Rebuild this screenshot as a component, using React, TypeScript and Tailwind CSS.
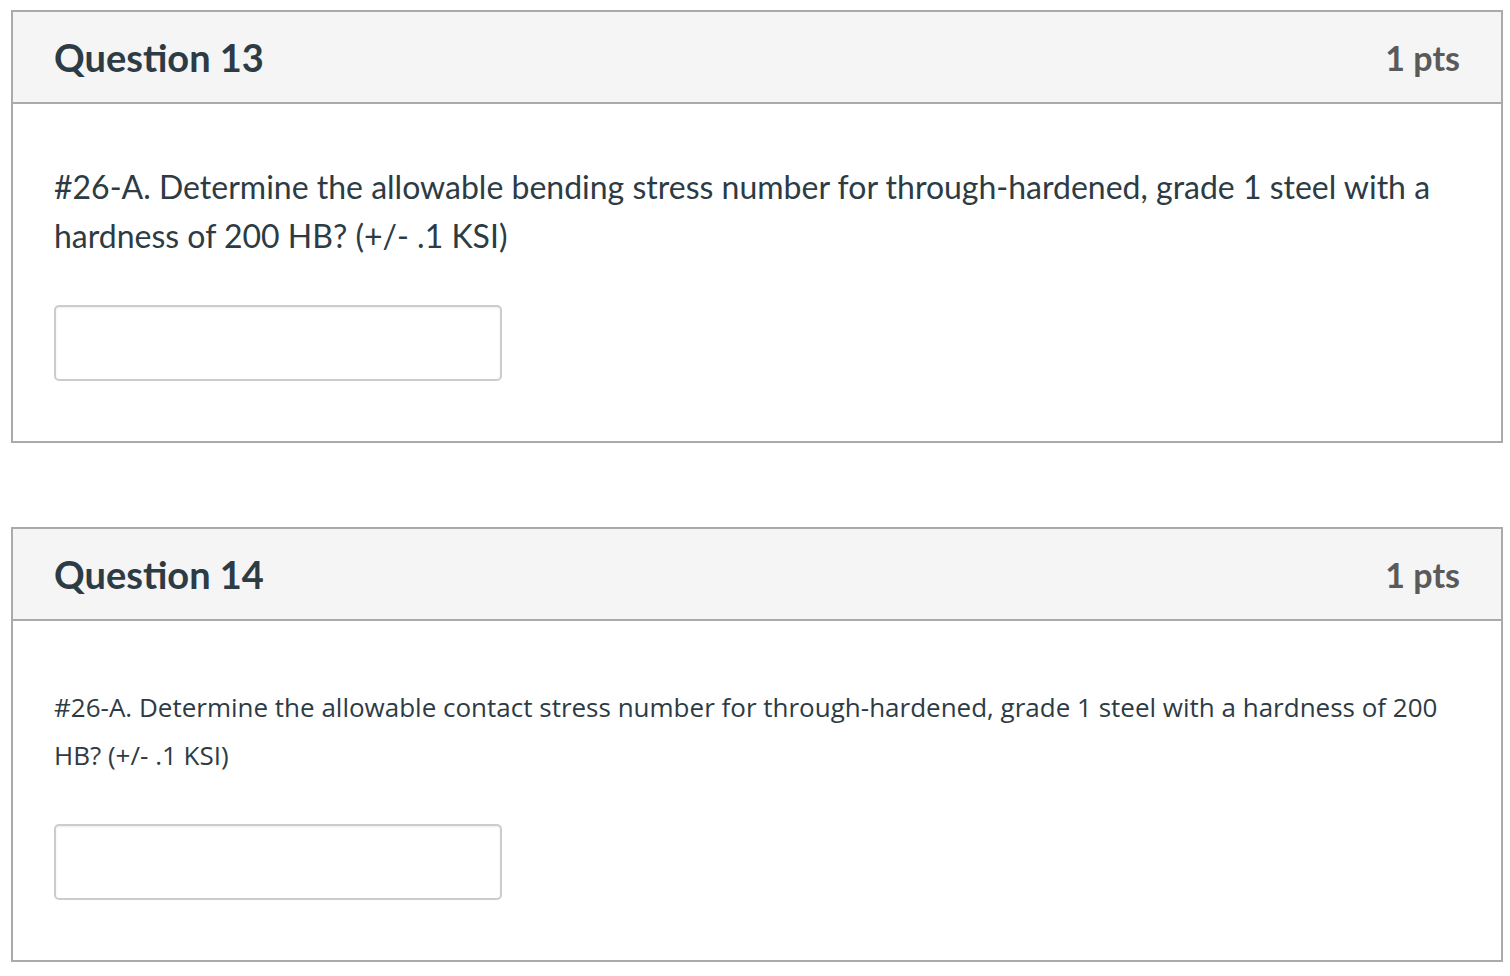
import React from "react";

function QuestionCard({
  title,
  text,
  bodyClass,
  bodyFont,
  pad,
}: {
  title: string;
  text: string;
  bodyClass: string;
  bodyFont: string;
  pad: string;
}) {
  return (
    <div className="w-[1492px] border-2 border-[#aaaaaa] bg-white">
      <div className="h-[92px] border-b-2 border-[#aaaaaa] bg-[#f5f5f5] flex items-center justify-between pl-[41px] pr-[41px]">
        <div
          className="text-[38px] font-bold text-[#2d3b45]"
          style={{ fontFamily: "Lato, sans-serif" }}
        >
          {title}
        </div>
        <div
          className="text-[34px] font-bold text-[#5a5a5a]"
          style={{ fontFamily: "Lato, sans-serif" }}
        >
          1 pts
        </div>
      </div>
      <div className={`pl-[41px] pr-[41px] ${pad}`}>
        <div className={bodyClass} style={{ fontFamily: bodyFont }}>
          {text}
        </div>
        <div className="mt-[45px] w-[448px] h-[76px] rounded-[5px] border-2 border-[#cccccc] shadow-[inset_0_1px_2px_rgba(0,0,0,0.08)] bg-white" />
      </div>
    </div>
  );
}

export default function App() {
  return (
    <div className="w-[1510px] h-[976px] bg-white pt-[10px] pl-[11px]">
      <QuestionCard
        title="Question 13"
        text="#26-A. Determine the allowable bending stress number for through-hardened, grade 1 steel with a hardness of 200 HB? (+/- .1 KSI)"
        bodyClass="text-[32px] leading-[49px] text-[#2d3b45]"
        bodyFont="Lato, sans-serif"
        pad="pt-[58px] pb-[60px]"
      />
      <div className="h-[84px]" />
      <QuestionCard
        title="Question 14"
        text="#26-A. Determine the allowable contact stress number for through-hardened, grade 1 steel with a hardness of 200 HB? (+/- .1 KSI)"
        bodyClass="text-[26px] leading-[48px] text-[#2d3b45]"
        bodyFont="'Open Sans', sans-serif"
        pad="pt-[62px] pb-[60px]"
      />
    </div>
  );
}
